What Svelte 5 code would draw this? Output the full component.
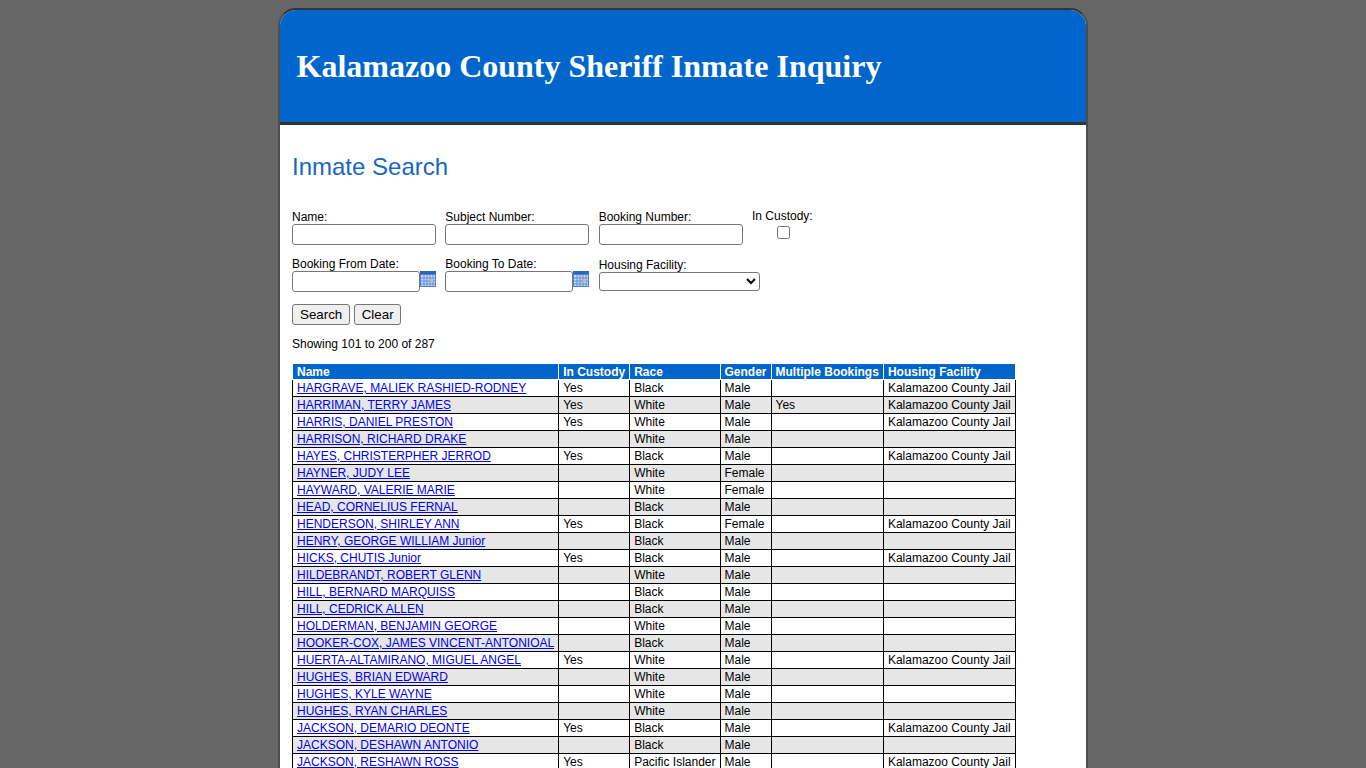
<script>
	const rows = [
		['HARGRAVE, MALIEK RASHIED-RODNEY', 'Yes', 'Black', 'Male', '', 'Kalamazoo County Jail'],
		['HARRIMAN, TERRY JAMES', 'Yes', 'White', 'Male', 'Yes', 'Kalamazoo County Jail'],
		['HARRIS, DANIEL PRESTON', 'Yes', 'White', 'Male', '', 'Kalamazoo County Jail'],
		['HARRISON, RICHARD DRAKE', '', 'White', 'Male', '', ''],
		['HAYES, CHRISTERPHER JERROD', 'Yes', 'Black', 'Male', '', 'Kalamazoo County Jail'],
		['HAYNER, JUDY LEE', '', 'White', 'Female', '', ''],
		['HAYWARD, VALERIE MARIE', '', 'White', 'Female', '', ''],
		['HEAD, CORNELIUS FERNAL', '', 'Black', 'Male', '', ''],
		['HENDERSON, SHIRLEY ANN', 'Yes', 'Black', 'Female', '', 'Kalamazoo County Jail'],
		['HENRY, GEORGE WILLIAM Junior', '', 'Black', 'Male', '', ''],
		['HICKS, CHUTIS Junior', 'Yes', 'Black', 'Male', '', 'Kalamazoo County Jail'],
		['HILDEBRANDT, ROBERT GLENN', '', 'White', 'Male', '', ''],
		['HILL, BERNARD MARQUISS', '', 'Black', 'Male', '', ''],
		['HILL, CEDRICK ALLEN', '', 'Black', 'Male', '', ''],
		['HOLDERMAN, BENJAMIN GEORGE', '', 'White', 'Male', '', ''],
		['HOOKER-COX, JAMES VINCENT-ANTONIOAL', '', 'Black', 'Male', '', ''],
		['HUERTA-ALTAMIRANO, MIGUEL ANGEL', 'Yes', 'White', 'Male', '', 'Kalamazoo County Jail'],
		['HUGHES, BRIAN EDWARD', '', 'White', 'Male', '', ''],
		['HUGHES, KYLE WAYNE', '', 'White', 'Male', '', ''],
		['HUGHES, RYAN CHARLES', '', 'White', 'Male', '', ''],
		['JACKSON, DEMARIO DEONTE', 'Yes', 'Black', 'Male', '', 'Kalamazoo County Jail'],
		['JACKSON, DESHAWN ANTONIO', '', 'Black', 'Male', '', ''],
		['JACKSON, RESHAWN ROSS', 'Yes', 'Pacific Islander', 'Male', '', 'Kalamazoo County Jail']
	];
	const headers = ['Name', 'In Custody', 'Race', 'Gender', 'Multiple Bookings', 'Housing Facility'];
</script>

{#snippet calendar()}
	<svg class="cal" width="16" height="16" viewBox="0 0 16 16" aria-hidden="true">
		<rect x="0" y="0" width="16" height="16" fill="#4a80d4" />
		<rect x="0" y="0" width="16" height="3" fill="#2f62b8" />
		<path d="M1 4h14v11H1z" fill="#c4d8f5" />
		<path d="M1 7h14M1 10h14M1 13h14M4 4v11M7 4v11M10 4v11M13 4v11" stroke="#5f90dc" stroke-width="1" fill="none" />
		<rect x="10" y="8" width="3" height="3" fill="#e8b96a" />
	</svg>
{/snippet}

<div class="page">
	<div class="card">
		<header class="banner">
			<h1>Kalamazoo County Sheriff Inmate Inquiry</h1>
		</header>
		<main class="content">
			<h2>Inmate Search</h2>
			<form class="search" onsubmit={(e) => e.preventDefault()}>
				<div class="form-row">
					<label class="field">Name:<input type="text" /></label>
					<label class="field">Subject Number:<input type="text" /></label>
					<label class="field">Booking Number:<input type="text" /></label>
					<label class="field custody">In Custody:<input type="checkbox" /></label>
				</div>
				<div class="form-row second">
					<label class="field">Booking From Date:
						<span class="date"><input type="text" />{@render calendar()}</span>
					</label>
					<label class="field">Booking To Date:
						<span class="date"><input type="text" />{@render calendar()}</span>
					</label>
					<label class="field facility">Housing Facility:
						<select><option></option></select>
					</label>
				</div>
				<div class="buttons">
					<button type="submit">Search</button>
					<button type="button" class="clear">Clear</button>
				</div>
			</form>
			<p class="count">Showing 101 to 200 of 287</p>
			<table>
				<thead>
					<tr>
						{#each headers as h}<th>{h}</th>{/each}
					</tr>
				</thead>
				<tbody>
					{#each rows as row, i}
						<tr class:alt={i % 2 === 1}>
							<td><a href="#top">{row[0]}</a></td>
							{#each row.slice(1) as cell}<td>{cell}</td>{/each}
						</tr>
					{/each}
				</tbody>
			</table>
		</main>
	</div>
</div>

<style>
	:global(body) {
		background: #666;
		font-family: "Liberation Sans", Arial, sans-serif;
		font-size: 12px;
	}
	.page {
		height: 768px;
		overflow: hidden;
		padding-top: 8px;
		box-sizing: border-box;
	}
	.card {
		width: 810px;
		margin: 0 auto;
		box-sizing: border-box;
		background: #fff;
		border: 2px solid #4d4d4d;
		border-top-color: #333;
		border-bottom: none;
		border-radius: 18px 18px 0 0;
		overflow: hidden;
	}
	.banner {
		background: #0066cc;
		border-bottom: 3px solid #333;
		height: 115px;
		box-sizing: border-box;
		padding: 0 16.5px;
		display: flex;
		align-items: center;
	}
	h1 {
		margin: 0;
		color: #fff;
		font-family: "Liberation Serif", "Times New Roman", serif;
		font-size: 32px;
		font-weight: bold;
	}
	.content {
		padding: 28px 12px 0;
	}
	h2 {
		margin: 0 0 29px;
		color: #1a66c2;
		font-size: 24px;
		font-weight: normal;
		line-height: 28px;
	}
	.form-row {
		display: flex;
		align-items: flex-start;
		gap: 9px;
		height: 37px;
	}
	.form-row.second {
		margin-top: 10px;
	}
	.field {
		display: flex;
		flex-direction: column;
		width: 144.33px;
		line-height: 14px;
		color: #000;
	}
	input[type='text'] {
		box-sizing: border-box;
		width: 144px;
		height: 21px;
		margin: 0;
		padding: 1px 2px;
		border: 1px solid #767676;
		border-radius: 3px;
		background: #fff;
	}
	.date {
		display: flex;
		align-items: flex-start;
	}
	.date input[type='text'] {
		width: 128px;
	}
	.cal {
		display: block;
	}
	.custody {
		align-items: flex-start;
		width: 61px;
		margin-top: -1px;
	}
	.custody input {
		width: 13px;
		height: 13px;
		margin: 3px 0 0 25px;
	}
	.facility {
		padding-top: 1px;
	}
	.facility select {
		width: 161px;
		height: 19px;
		box-sizing: border-box;
		border: 1px solid #767676;
		border-radius: 3px;
		background: #fff;
	}
	.buttons {
		display: flex;
		gap: 4px;
		margin-top: 10px;
	}
	button {
		height: 21px;
		padding: 1px 7px;
		font-family: "Liberation Sans", Arial, sans-serif;
		font-size: 13.33px;
		color: #000;
		background: #efefef;
		border: 1px solid #767676;
		border-radius: 3px;
	}
	.clear {
		padding: 1px 6.5px;
	}
	.count {
		margin: 12px 0 13px;
		line-height: 14px;
	}
	table {
		border-collapse: collapse;
	}
	th {
		background: #0066cc;
		color: #fff;
		font-weight: bold;
		text-align: left;
		padding: 1px 4px 0;
		border: 1px solid #fff;
		border-top: none;
		line-height: 14px;
		white-space: nowrap;
	}
	td {
		border: 1px solid #000;
		padding: 1px 4px;
		line-height: 14px;
		height: 14px;
		white-space: nowrap;
	}
	tr.alt td {
		background: #e6e6e6;
	}
	a {
		color: #0000ee;
	}
</style>
